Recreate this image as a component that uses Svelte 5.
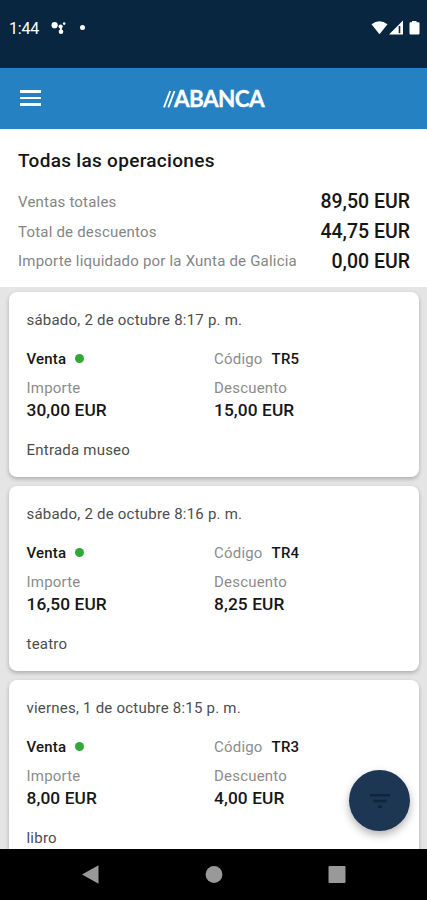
<script lang="ts">
	const totals = [
		{ label: 'Ventas totales', amount: '89,50 EUR' },
		{ label: 'Total de descuentos', amount: '44,75 EUR' },
		{ label: 'Importe liquidado por la Xunta de Galicia', amount: '0,00 EUR' }
	];

	const operations = [
		{
			date: 'sábado, 2 de octubre 8:17 p. m.',
			type: 'Venta',
			code: 'TR5',
			amount: '30,00 EUR',
			discount: '15,00 EUR',
			concept: 'Entrada museo'
		},
		{
			date: 'sábado, 2 de octubre 8:16 p. m.',
			type: 'Venta',
			code: 'TR4',
			amount: '16,50 EUR',
			discount: '8,25 EUR',
			concept: 'teatro'
		},
		{
			date: 'viernes, 1 de octubre 8:15 p. m.',
			type: 'Venta',
			code: 'TR3',
			amount: '8,00 EUR',
			discount: '4,00 EUR',
			concept: 'libro'
		}
	];
</script>

<div class="screen">
	<div class="status-bar">
		<span class="clock">1:44</span>
		<svg class="notification" width="16" height="14" viewBox="0 0 16 14">
			<circle cx="3.6" cy="4.2" r="3.1" />
			<circle cx="9.6" cy="5.6" r="2.1" />
			<circle cx="10" cy="10.8" r="2.3" />
			<circle cx="13.2" cy="2.6" r="1.3" />
			<path d="M9 5h1.8v6H9z" />
		</svg>
		<span class="more-dot"></span>
		<svg class="system" width="50" height="16" viewBox="0 0 50 16">
			<path d="M0.5 4.2Q8.5 -1.8 16.5 4.2L8.5 14.2Z" />
			<path d="M18 14.5L32 .5V14.5Z" />
			<path class="cut" d="M27.7 6h1.6v7.2h-1.6z" />
			<path d="M41 1h4.5v1.2h2q1 0 1 1v10.3q0 1-1 1h-8q-1 0-1-1v-10.3q0-1 1-1h1.5z" />
		</svg>
	</div>

	<header class="app-bar">
		<button class="menu" aria-label="Menú">
			<span></span>
			<span></span>
			<span></span>
		</button>
		<div class="logo">
			<svg width="14" height="18" viewBox="0 0 14 18">
				<path d="M1 17.3L7.2 1M5.3 17.3L11.5 1" />
			</svg>
			<span>ABANCA</span>
		</div>
	</header>

	<section class="summary">
		<h1>Todas las operaciones</h1>
		{#each totals as total}
			<div class="total">
				<span class="total-label">{total.label}</span>
				<span class="total-amount">{total.amount}</span>
			</div>
		{/each}
	</section>

	<main class="operations">
		{#each operations as op}
			<article class="card">
				<p class="date">{op.date}</p>
				<div class="row">
					<div class="type">{op.type}<span class="dot"></span></div>
					<div><span class="code-label">Código</span><span class="code">{op.code}</span></div>
				</div>
				<div class="row amounts">
					<div>
						<div class="label">Importe</div>
						<div class="amount">{op.amount}</div>
					</div>
					<div>
						<div class="label">Descuento</div>
						<div class="amount">{op.discount}</div>
					</div>
				</div>
				<p class="concept">{op.concept}</p>
			</article>
		{/each}
	</main>

	<button class="filter" aria-label="Filtrar">
		<svg width="20" height="14" viewBox="0 0 20 14">
			<path d="M0 0H20V2.6H0ZM3.4 5.7H16.6V8.3H3.4ZM7.8 11.4H12.2V14H7.8Z" />
		</svg>
	</button>

	<nav class="nav-bar">
		<svg width="18" height="20" viewBox="0 0 18 20"><path d="M0 9.5L16.5 .3V18.7Z" /></svg>
		<svg width="18" height="20" viewBox="0 0 18 20"><circle cx="9" cy="9.5" r="8.4" /></svg>
		<svg width="18" height="20" viewBox="0 0 18 20"><rect x="0.5" y="1" width="17" height="17" rx="1" /></svg>
	</nav>
</div>

<style>
	:global(body) {
		margin: 0;
	}

	.screen {
		position: relative;
		display: flex;
		flex-direction: column;
		width: 427px;
		height: 900px;
		overflow: hidden;
		background: #e5e5e5;
		font-family: Roboto, sans-serif;
		color: #161616;
	}

	button {
		padding: 0;
		border: none;
		background: none;
	}

	.status-bar {
		display: flex;
		align-items: center;
		flex: none;
		box-sizing: border-box;
		height: 68px;
		padding: 0 6px 13px 9px;
		background: #092640;
		color: #fff;
		fill: #fff;
	}

	.clock {
		width: 42px;
		padding-top: 1px;
		font-size: 16px;
		letter-spacing: -0.2px;
	}

	.more-dot {
		width: 5px;
		height: 5px;
		margin-left: 13px;
		border-radius: 50%;
		background: #fff;
	}

	.system {
		margin-left: auto;
	}

	.system .cut {
		fill: #092640;
	}

	.app-bar {
		display: grid;
		grid-template-columns: 1fr auto 1fr;
		align-items: center;
		flex: none;
		box-sizing: border-box;
		height: 61px;
		padding-bottom: 1px;
		background: #2581c1;
	}

	.menu {
		display: flex;
		flex-direction: column;
		gap: 4px;
		width: 21px;
		margin-left: 20px;
	}

	.menu span {
		height: 2.4px;
		background: #fff;
	}

	.logo {
		display: flex;
		align-items: center;
		padding-top: 2px;
		color: #fff;
		font-family: Lato, sans-serif;
		font-size: 22.5px;
		font-weight: 700;
		line-height: 24px;
		letter-spacing: -0.6px;
		-webkit-text-stroke: 0.3px #fff;
	}

	.logo svg {
		margin-right: -3px;
		fill: none;
		stroke: #fff;
		stroke-width: 1.9;
	}

	.summary {
		flex: none;
		box-sizing: border-box;
		height: 158px;
		padding: 20px 17px 0 18px;
		background: #fff;
	}

	h1 {
		margin: 0 0 14px;
		font-size: 19px;
		font-weight: 500;
		line-height: 24px;
		letter-spacing: 0.3px;
	}

	.total {
		display: flex;
		align-items: center;
		justify-content: space-between;
		height: 29.7px;
	}

	.total-label {
		color: #858585;
		font-size: 15px;
		letter-spacing: 0.2px;
	}

	.total-amount {
		font-size: 19.5px;
		font-weight: 500;
	}

	.operations {
		display: flex;
		flex: 1;
		flex-direction: column;
		gap: 9px;
		min-height: 0;
		padding: 5px 8px 0 9px;
		overflow: hidden;
	}

	.card {
		flex: none;
		box-sizing: border-box;
		height: 185px;
		padding: 18px 17px 0 17.5px;
		border-radius: 8px;
		background: #fff;
		box-shadow: 0 2px 4px rgba(0, 0, 0, 0.25);
	}

	p {
		margin: 0;
	}

	.date,
	.concept {
		color: #4d4d4d;
		font-size: 15px;
		line-height: 20px;
		letter-spacing: 0.22px;
	}

	.row {
		display: grid;
		grid-template-columns: 187.5px 1fr;
		margin-top: 19px;
		font-size: 15px;
		line-height: 20px;
	}

	.row.amounts {
		margin-top: 9px;
	}

	.type,
	.code {
		font-weight: 500;
		letter-spacing: 0.2px;
	}

	.type {
		display: flex;
		align-items: center;
	}

	.dot {
		width: 9px;
		height: 9px;
		margin: -2px 0 0 9px;
		border-radius: 50%;
		background: #31a836;
	}

	.label,
	.code-label {
		color: #8c8c8c;
		letter-spacing: 0.2px;
	}

	.code {
		margin-left: 9px;
	}

	.amount {
		font-size: 17.3px;
		font-weight: 500;
		line-height: 24px;
		letter-spacing: 0.1px;
	}

	.concept {
		margin-top: 18px;
	}

	.filter {
		position: absolute;
		right: 17px;
		bottom: 69px;
		display: flex;
		align-items: center;
		justify-content: center;
		width: 61px;
		height: 61px;
		border-radius: 50%;
		background: #1d3654;
		box-shadow: 0 4px 8px rgba(0, 0, 0, 0.3);
		fill: #10243d;
	}

	.nav-bar {
		display: flex;
		align-items: center;
		justify-content: center;
		gap: 105px;
		flex: none;
		height: 51px;
		background: #000;
		fill: #999;
	}
</style>
